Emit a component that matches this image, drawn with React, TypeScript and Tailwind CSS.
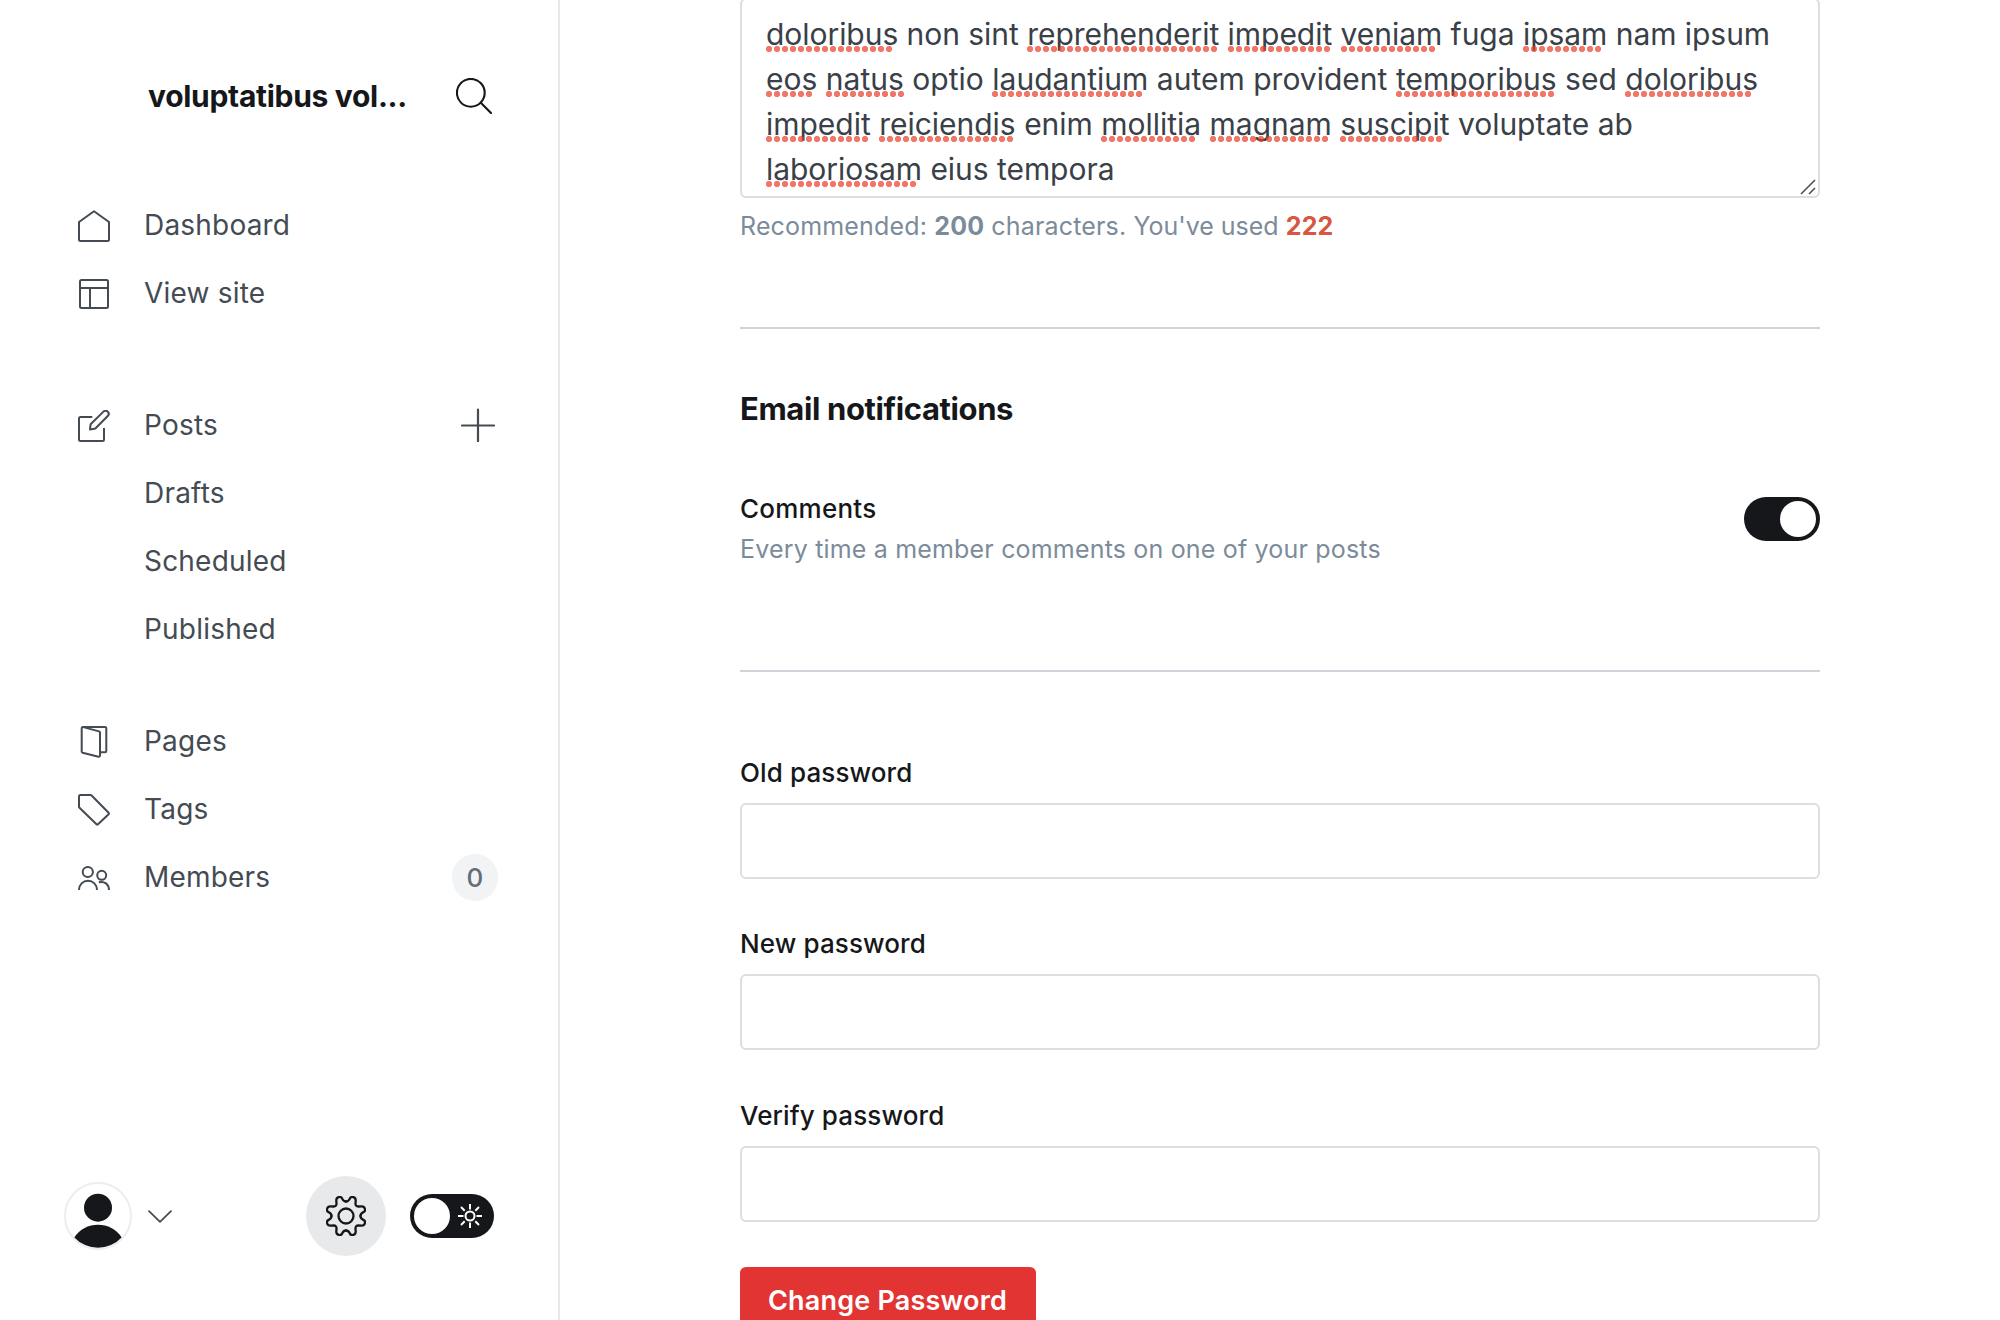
import React from "react";

const Icon = ({ children, className = "" }: { children: React.ReactNode; className?: string }) => (
  <svg
    viewBox="0 0 32 32"
    className={`size-8 shrink-0 ${className}`}
    fill="none"
    stroke="currentColor"
    strokeWidth="2"
    strokeLinecap="round"
    strokeLinejoin="round"
  >
    {children}
  </svg>
);

const HomeIcon = (
  <Icon>
    <path d="M16 1.2 1 12v17.5C1 30.3 1.7 31 2.5 31h27c.8 0 1.5-.7 1.5-1.5V12L16 1.2z" />
  </Icon>
);
const SiteIcon = (
  <Icon>
    <rect x="2" y="2" width="28" height="28" rx="1.5" />
    <path d="M2 10h28M12 10v20" />
  </Icon>
);
const PostsIcon = (
  <Icon>
    <path strokeLinecap="butt" d="M14.3 7H2.5C1.7 7 1 7.7 1 8.5v21c0 .8.7 1.5 1.5 1.5h22c.8 0 1.500-.7 1.500-1.5V18" />
    <path d="m12 19.4.5-4.5a2 2 0 0 1 .6-1.2L25.2 1.9a3 3 0 0 1 4.800 3.900L17.600 18.200a2 2 0 0 1-1.200.6z" />
  </Icon>
);
const PagesIcon = (
  <Icon>
    <path d="M23 26.300h4c.8 0 1.300-.5 1.300-1.300V2.300c0-.8-.5-1.300-1.300-1.300H5" />
    <path d="M5.300 1.100 21 5.400c.6.200 1 .6 1 1.200v22.900c0 .9-.7 1.500-1.500 1.200L4.600 26.700c-.6-.2-.9-.6-.9-1.200V2.300c0-.9.8-1.400 1.600-1.200z" />
  </Icon>
);
const TagsIcon = (
  <Icon>
    <path d="M2.500 1h10c.5 0 .8.200 1.100.5l17 17.200c.5.500.500 1 0 1.500L20 30.300c-.5.500-1 .5-1.500 0l-17-16.500c-.3-.3-.5-.7-.5-1.100V2.500C1 1.700 1.700 1 2.500 1z" />
  </Icon>
);
const MembersIcon = (
  <Icon>
    <g strokeLinecap="butt">
      <circle cx="9.800" cy="10" r="5.100" />
      <circle cx="23.700" cy="13.300" r="4.500" />
      <path d="M1 28c0-5.500 4-9.200 9-9.200s9 3.700 9 9.200" />
      <path d="M20.800 20.300c5.500-1.600 10.200 2 10.200 7.700" />
    </g>
  </Icon>
);

function NavItem({ icon, label, children }: { icon?: React.ReactNode; label: string; children?: React.ReactNode }) {
  return (
    <li className="flex h-[68px] items-center pl-[78px] pr-16">
      <span className="mr-[34px] mt-0.5 flex w-8 shrink-0">{icon}</span>
      <span className="flex-1 text-[28px] leading-[34px] tracking-[0.2px]">{label}</span>
      {children}
    </li>
  );
}

const gearQuarter =
  "M0-14.500C1.800-14.500 2.800-15.400 3.600-17C4.400-19 5.800-19.300 7.200-18.900C9-18.400 9.800-17.200 9.700-15.400L9.500-12.500C9.400-10.500 10.500-9.400 12.500-9.500L15.400-9.700C17.200-9.800 18.400-9 18.900-7.200C19.300-5.800 19-4.400 17-3.600C15.400-2.800 14.500-1.800 14.500 0";

function Sidebar() {
  return (
    <aside className="flex h-[1320px] w-[560px] shrink-0 flex-col border-r-2 border-[#e6e8ea] text-[#444b53]">
      <div className="mt-[76px] flex h-10 items-center justify-between pl-[148px] pr-[66px] text-[#15171a]">
        <div className="text-[30px] font-bold leading-10 tracking-[-0.3px]">voluptatibus vol...</div>
        <svg viewBox="0 0 36 36" className="size-9" fill="none" stroke="currentColor" strokeWidth="2.100" strokeLinecap="round">
          <circle cx="14.800" cy="14.800" r="13.900" />
          <path d="m24.800 24.800 10.200 10.200" />
        </svg>
      </div>
      <nav className="mt-[75px]">
        <ul>
          <NavItem icon={HomeIcon} label="Dashboard" />
          <NavItem icon={SiteIcon} label="View site" />
        </ul>
        <ul className="mt-16">
          <NavItem icon={PostsIcon} label="Posts">
            <svg viewBox="0 0 34 34" className="-mr-px size-[34px]" stroke="currentColor" strokeWidth="2.200" strokeLinecap="round">
              <path d="M17 1.500v32M1 17.500h32" />
            </svg>
          </NavItem>
          <NavItem label="Drafts" />
          <NavItem label="Scheduled" />
          <NavItem label="Published" />
        </ul>
        <ul className="mt-11">
          <NavItem icon={PagesIcon} label="Pages" />
          <NavItem icon={TagsIcon} label="Tags" />
          <NavItem icon={MembersIcon} label="Members">
            <span className="-mr-1 mt-px flex h-[47px] w-[46px] items-center justify-center rounded-full bg-[#f1f3f5] text-[26px] font-medium leading-none text-[#626d79]">
              0
            </span>
          </NavItem>
        </ul>
      </nav>
      <div className="mb-16 mt-auto flex items-center pl-16 pr-16">
        <svg viewBox="0 0 68 68" className="size-[68px]">
          <circle cx="34" cy="34" r="33" fill="#fff" stroke="#eceeee" strokeWidth="2" />
          <circle cx="34" cy="25.700" r="14" fill="#15171a" />
          <path d="M10.400 55.400A28.300 28.300 0 0 1 57.600 55.400A32 32 0 0 1 10.400 55.400z" fill="#15171a" />
        </svg>
        <svg viewBox="0 0 24 14" className="ml-4 h-[14px] w-6" fill="none" stroke="currentColor" strokeWidth="1.700" strokeLinecap="round" strokeLinejoin="round">
          <path d="m1 2.100 11 10.800L23 2.100" />
        </svg>
        <div className="ml-auto flex size-20 items-center justify-center rounded-full bg-[#e8e9eb]">
          <svg viewBox="-20 -20 40 40" className="size-10 text-[#15171a]" fill="none" stroke="currentColor" strokeWidth="2.300" strokeLinecap="round">
            <path d={gearQuarter} />
            <path d={gearQuarter} transform="rotate(90)" />
            <path d={gearQuarter} transform="rotate(180)" />
            <path d={gearQuarter} transform="rotate(270)" />
            <circle r="7.500" />
          </svg>
        </div>
        <div className="ml-6 flex h-11 w-[84px] items-center justify-between rounded-full bg-[#15171a] pl-1 pr-3 text-white">
          <span className="size-9 rounded-full bg-white" />
          <svg viewBox="-12 -12 24 24" className="size-6" fill="none" stroke="currentColor" strokeWidth="2">
            <circle r="4.500" />
            <path d="M0-12v5.500M0 12V6.500M-12 0h5.500M12 0H6.500M-9-9l3.700 3.700M9 9 5.300 5.300M-9 9l3.700-3.700M9-9 5.300-5.300" />
          </svg>
        </div>
      </div>
    </aside>
  );
}

const bioLines = [
  { text: "_doloribus_ non sint _reprehenderit_ _impedit_ _veniam_ fuga _ipsam_ nam ipsum", tracking: "tracking-[-0.045px]" },
  { text: "_eos_ _natus_ optio _laudantium_ autem provident _temporibus_ sed _doloribus_", tracking: "tracking-[0.015px]" },
  { text: "_impedit_ _reiciendis_ enim _mollitia_ _magnam_ _suscipit_ voluptate ab", tracking: "tracking-[-0.015px]" },
  { text: "_laboriosam_ eius tempora", tracking: "tracking-[-0.045px]" },
];

function Misspelled({ children }: { children: React.ReactNode }) {
  return (
    <span className="relative after:absolute after:left-0 after:top-[30px] after:h-[6px] after:w-[round(down,calc(100%+2px),8px)] after:bg-[radial-gradient(circle_at_3px_3px,rgba(236,60,40,0.7)_2.800px,transparent_3.400px)] after:bg-[length:8px_6px] after:bg-repeat-x after:content-['']">
      {children}
    </span>
  );
}

function BioField() {
  return (
    <div className="relative -mt-0.5 h-[200px] w-full rounded-md border-2 border-[#dddedf] pl-6 pt-3 text-[30px] leading-[45px] text-[#394047]">
      {bioLines.map((line) => (
        <div key={line.text} className={`whitespace-nowrap ${line.tracking}`}>
          {line.text.split(" ").map((word, i) => (
            <React.Fragment key={i}>
              {i > 0 && " "}
              {word.startsWith("_") ? <Misspelled>{word.slice(1, -1)}</Misspelled> : word}
            </React.Fragment>
          ))}
        </div>
      ))}
      <svg viewBox="0 0 16 16" className="absolute bottom-px right-0.5 size-4" stroke="#4a4a4a" strokeWidth="1.500">
        <path d="M1 15 15 1M9 15l6-6" />
      </svg>
    </div>
  );
}

function PasswordField({ label, className = "" }: { label: string; className?: string }) {
  return (
    <label className={`block ${className}`}>
      <span className="block text-[26px] font-medium leading-[31px] tracking-[0.12px] text-[#15171a]">{label}</span>
      <input type="password" className="mt-[15px] block h-[76px] w-full rounded-md border-2 border-[#dddedf] bg-white px-6" />
    </label>
  );
}

export default function App() {
  return (
    <div className="flex h-[1320px] w-[2000px] overflow-hidden bg-white font-['Inter',sans-serif]">
      <Sidebar />
      <main className="ml-[180px] flex h-[1320px] w-[1080px] flex-col items-start overflow-hidden">
        <div className="w-full">
          <BioField />
          <p className="mt-2.5 text-[25px] leading-9 tracking-[0.16px] text-[#7c8b9a]">
            Recommended: <b className="font-bold">200</b> characters.{" "}
            <span className="tracking-[-0.03px]">You've used</span>{" "}
            <b className="font-bold text-[#d8553f]">222</b>
          </p>
        </div>
        <div className="mt-[83px] h-0.5 w-full shrink-0 bg-[#ced4d9]" />
        <h4 className="mt-[60px] text-[31px] font-bold leading-[39px] tracking-[-0.38px] text-[#15171a]">Email notifications</h4>
        <div className="mt-[65px] flex w-full items-start justify-between">
          <div>
            <div className="text-[26px] font-medium leading-[31px] tracking-[0.25px] text-[#15171a]">Comments</div>
            <p className="mt-2.5 text-[25px] leading-[30px] tracking-[0.18px] text-[#7c8b9a]">
              Every time a member comments on one of your posts
            </p>
          </div>
          <div className="mt-1 flex h-11 w-[76px] items-center justify-end rounded-full bg-[#15171a] pr-1">
            <span className="size-9 rounded-full bg-white" />
          </div>
        </div>
        <div className="mt-[106px] h-0.5 w-full shrink-0 bg-[#ced4d9]" />
        <div className="mt-[85px] w-full">
          <PasswordField label="Old password" />
          <PasswordField label="New password" className="mt-[49px]" />
          <PasswordField label="Verify password" className="mt-[50px]" />
        </div>
        <button className="mt-[45px] h-[76px] w-[296px] shrink-0 rounded-md bg-[#e13433] pb-[26px] pr-px pt-[17px] text-[27px] font-semibold leading-[33px] tracking-[0.2px] text-white">
          Change Password
        </button>
      </main>
    </div>
  );
}
